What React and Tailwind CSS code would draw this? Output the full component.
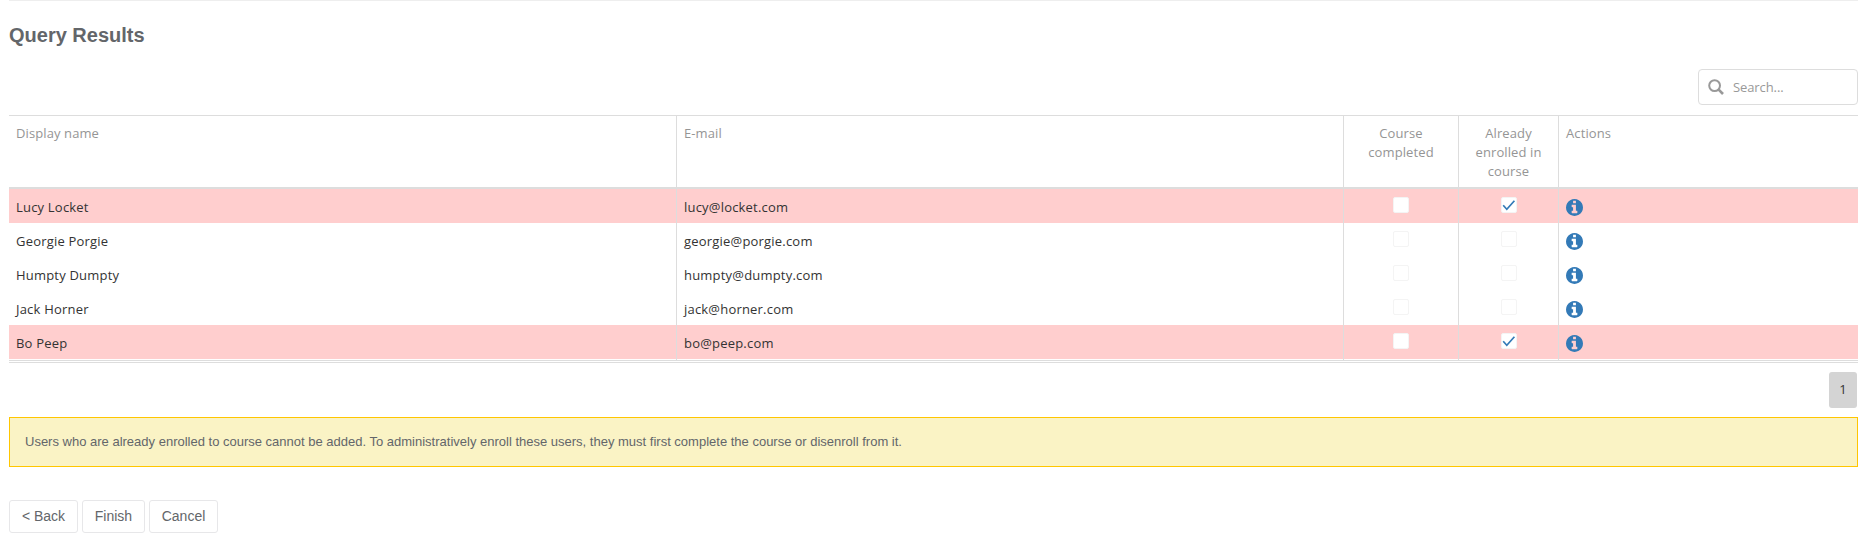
import React from "react";

const rows = [
  { name: "Lucy Locket", email: "lucy@locket.com", enrolled: true },
  { name: "Georgie Porgie", email: "georgie@porgie.com", enrolled: false },
  { name: "Humpty Dumpty", email: "humpty@dumpty.com", enrolled: false },
  { name: "Jack Horner", email: "jack@horner.com", enrolled: false },
  { name: "Bo Peep", email: "bo@peep.com", enrolled: true },
];

const columns = "grid grid-cols-[667px_667px_115px_100px_300px]";

function InfoIcon() {
  return (
    <svg viewBox="0 128 1536 1536" className="size-[17px]" fill="#337ab7">
      <path d="M1024 1376v-160q0-14-9-23t-23-9h-96v-512q0-14-9-23t-23-9h-320q-14 0-23 9t-9 23v160q0 14 9 23t23 9h96v320h-96q-14 0-23 9t-9 23v160q0 14 9 23t23 9h448q14 0 23-9t9-23zm-128-896v-160q0-14-9-23t-23-9h-192q-14 0-23 9t-9 23v160q0 14 9 23t23 9h192q14 0 23-9t9-23zm640 416q0 209-103 385.5t-279.5 279.5-385.5 103-385.5-103-279.5-279.5-103-385.5 103-385.5 279.5-279.5 385.5-103 385.5 103 279.5 279.5 103 385.5z" />
    </svg>
  );
}

function Checkbox({ checked }) {
  return (
    <span className="mt-2 flex size-4 items-center justify-center rounded-[2px] border border-[#f4f4f4] bg-white">
      {checked && (
        <svg viewBox="0 0 14 14" className="size-3.5" fill="none" stroke="#337ab7" strokeWidth="1.7">
          <path d="M1.2 7.2 4.8 11.2 12.4 2.8" />
        </svg>
      )}
    </span>
  );
}

function Row({ row }) {
  return (
    <div className={`${columns} h-[34px] tracking-[0.2px] text-[#333] ${row.enrolled ? "bg-[#ffcece]" : "bg-white"}`}>
      <div className="px-[7px] pt-[9px]">{row.name}</div>
      <div className="border-l border-[#ddd] px-[7px] pt-[9px]">{row.email}</div>
      <div className="flex justify-center border-l border-[#ddd]">
        <Checkbox checked={false} />
      </div>
      <div className="flex justify-center border-l border-[#ddd]">
        <Checkbox checked={row.enrolled} />
      </div>
      <div className="border-l border-[#ddd] pt-[10px] pl-[7px]">
        <InfoIcon />
      </div>
    </div>
  );
}

function Button({ className, children }) {
  return (
    <button className={`h-[33px] rounded-[3px] border border-[#e7e7e9] bg-white pb-0.5 text-sm leading-5 text-[#63666a] ${className}`}>
      {children}
    </button>
  );
}

export default function App() {
  return (
    <div className="h-[546px] bg-white pr-[15px] pl-[9px] font-['Liberation_Sans',Arial,sans-serif]">
      <div className="h-[115px] border-t border-[#eee]">
        <h1 className="h-[68px] pt-[22px] text-[20px] leading-6 font-bold text-[#63666a]">Query Results</h1>
        <div className="ml-auto flex h-9 w-40 items-center rounded-[4px] border border-[#ddd] pl-[9px] font-['Open_Sans',sans-serif] text-[13px] text-[#999]">
          <svg viewBox="0 0 16 16" className="mr-[9px] size-4" fill="none" stroke="#999" strokeWidth="2">
            <circle cx="6.6" cy="6.6" r="5.4" />
            <path d="M10.4 10.4 15 15" strokeWidth="2.6" />
          </svg>
          <span className="pt-0.5 tracking-[-0.1px]">Search...</span>
        </div>
      </div>

      <div className="border-y border-[#ddd] pb-px font-['Open_Sans',sans-serif] text-[13px] leading-[19px]">
        <div className={`${columns} h-[73px] border-b-2 border-[#ddd] tracking-[0.1px] text-[#959595]`}>
          <div className="px-[7px] pt-2">Display name</div>
          <div className="border-l border-[#ddd] px-[7px] pt-2">E-mail</div>
          <div className="border-l border-[#ddd] px-[7px] pt-2 text-center">
            Course
            <br />
            completed
          </div>
          <div className="border-l border-[#ddd] px-[7px] pt-2 text-center">
            Already
            <br />
            enrolled in
            <br />
            course
          </div>
          <div className="border-l border-[#ddd] px-[7px] pt-2">Actions</div>
        </div>
        {rows.map((row) => (
          <Row key={row.email} row={row} />
        ))}
        <div className={`${columns} h-0.5 border-b border-[#ddd]`}>
          <div />
          <div className="border-l border-[#ddd]" />
          <div className="border-l border-[#ddd]" />
          <div className="border-l border-[#ddd]" />
          <div className="border-l border-[#ddd]" />
        </div>
      </div>

      <div className="flex h-[54px] justify-end pt-[9px] pr-px">
        <div className="flex h-9 w-7 items-center justify-center rounded-[3px] bg-[#d4d4d4] font-['Open_Sans',sans-serif] text-[13px] text-[#333]">
          1
        </div>
      </div>

      <div className="h-[50px] border border-[#ffc600] bg-[#faf3c5] pt-4 pl-[15px] text-[13px] leading-4 text-[#63666a]">
        Users who are already enrolled to course cannot be added. To administratively enroll these users, they must first
        complete the course or disenroll from it.
      </div>

      <div className="mt-[33px] flex gap-1">
        <Button className="w-[69px]">&lt; Back</Button>
        <Button className="w-[63px]">Finish</Button>
        <Button className="w-[69px]">Cancel</Button>
      </div>
    </div>
  );
}
